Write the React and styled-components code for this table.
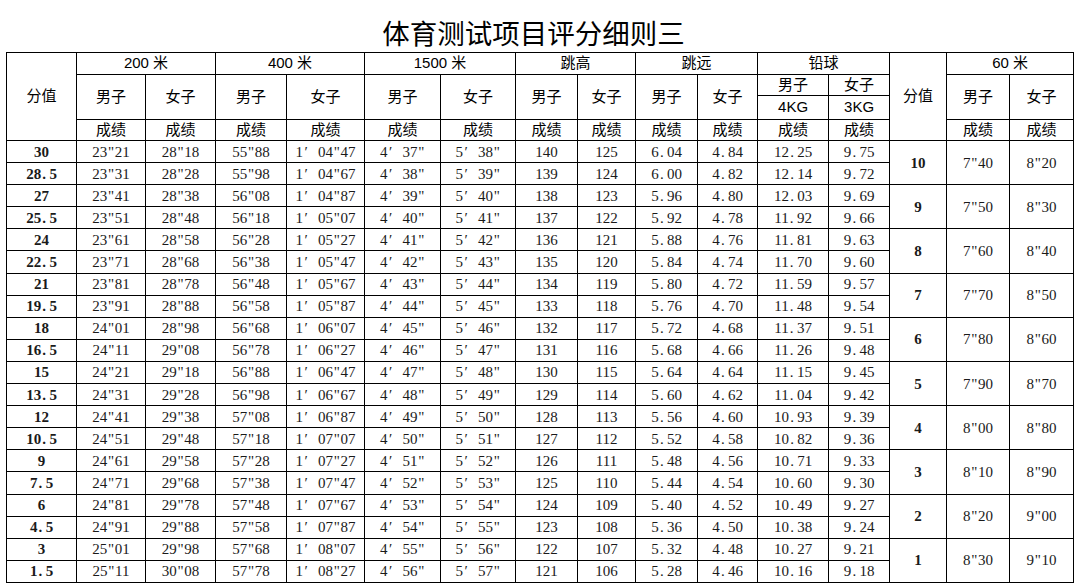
import React from 'react';
import styled, { createGlobalStyle } from 'styled-components';

// column widths, left to right
const widths = [70, 69, 70, 71, 78, 76, 75, 62, 58, 62, 60, 71, 61, 57, 63, 64];

const events = ['200 米', '400 米', '1500 米', '跳高', '跳远', '铅球'];

const pad = n => String(n).padStart(2, '0');
const hundredths = v => `${Math.floor(v / 100)}.${pad(v % 100)}`;
const sprint = v => `${Math.floor(v / 100)}"${pad(v % 100)}`;
const score = v => (v % 2 === 0 ? String(v / 2) : `${(v - 1) / 2}.5`);

// the main block: 20 score steps, 30 down to 1.5
const rows = Array.from({ length: 20 }, (_, i) => {
  const lap = 6447 + 20 * i - 6000;
  return [
    score(60 - 3 * i),
    sprint(2321 + 10 * i),
    sprint(2818 + 10 * i),
    sprint(5588 + 10 * i),
    `1′${pad(Math.floor(lap / 100))}"${pad(lap % 100)}`,
    `4′${37 + i}"`,
    `5′${38 + i}"`,
    String(140 - i),
    String(125 - i),
    hundredths(604 - 4 * i),
    hundredths(484 - 2 * i),
    hundredths(1225 - 11 * i),
    hundredths(975 - 3 * i),
  ];
});

// 60 米 block, one row for every two of the main rows
const dash = Array.from({ length: 10 }, (_, k) => [
  String(10 - k),
  sprint(740 + 10 * k),
  sprint(820 + 10 * k),
]);

// SimSun-like spacing for the marks inside a result
const marks = text =>
  text.split('').map((ch, i) => {
    if (ch === '.') return <Dot key={i}>.</Dot>;
    if (ch === '′') return <Prime key={i}>′</Prime>;
    if (ch === '"') return <Quote key={i}>"</Quote>;
    return ch;
  });

const GlobalStyle = createGlobalStyle`
  body {
    margin: 0;
    background: #fff;
    color: #000;
  }
`;

const App = () => (
  <Sheet>
    <GlobalStyle />
    <Title>体育测试项目评分细则三</Title>
    <Grid>
      <colgroup>
        {widths.map((w, i) => (
          <Col key={i} $w={w} />
        ))}
      </colgroup>
      <thead>
        <Row $h={22}>
          <Head rowSpan={4}>分值</Head>
          {events.map(name => (
            <Head key={name} colSpan={2}>{name}</Head>
          ))}
          <Head rowSpan={4}>分值</Head>
          <Head colSpan={2}>60 米</Head>
        </Row>
        <Row $h={21.5}>
          {[0, 1, 2, 3, 4].map(k => (
            <React.Fragment key={k}>
              <Head rowSpan={2}>男子</Head>
              <Head rowSpan={2}>女子</Head>
            </React.Fragment>
          ))}
          <Head>男子</Head>
          <Head>女子</Head>
          <Head rowSpan={2}>男子</Head>
          <Head rowSpan={2}>女子</Head>
        </Row>
        <Row $h={23.5}>
          <Head>4KG</Head>
          <Head>3KG</Head>
        </Row>
        <Row $h={21.5}>
          {Array.from({ length: 12 }, (_, k) => (
            <Head key={k}>成绩</Head>
          ))}
          <Head>成绩</Head>
          <Head>成绩</Head>
        </Row>
      </thead>
      <tbody>
        {rows.map((row, i) => (
          <Row key={i} $h={22.1}>
            <Cell $bold>{marks(row[0])}</Cell>
            {row.slice(1).map((v, j) => (
              <Cell key={j}>{marks(v)}</Cell>
            ))}
            {i % 2 === 0 && (
              <>
                <Cell $bold rowSpan={2}>{dash[i / 2][0]}</Cell>
                <Cell rowSpan={2}>{marks(dash[i / 2][1])}</Cell>
                <Cell rowSpan={2}>{marks(dash[i / 2][2])}</Cell>
              </>
            )}
          </Row>
        ))}
      </tbody>
    </Grid>
  </Sheet>
);

const Sheet = styled.div`
  padding-left: 6px;
  width: 1067px;
`;

const Title = styled.h1`
  margin: 0;
  padding: 13px 12px 0 0;
  height: 38.5px;
  line-height: 38px;
  text-align: center;
  font-family: 'Noto Sans CJK SC', sans-serif;
  font-size: 27.5px;
  font-weight: 400;
`;

const Grid = styled.table`
  border-collapse: collapse;
  table-layout: fixed;
  width: 1067px;
`;

const Col = styled.col`
  width: ${p => p.$w}px;
`;

const Row = styled.tr`
  height: ${p => p.$h}px;
`;

const Head = styled.th`
  border: 1px solid #000;
  padding: 0;
  text-align: center;
  vertical-align: middle;
  font-family: 'Liberation Sans', 'Noto Sans CJK SC', sans-serif;
  font-size: 15px;
  font-weight: 400;
  line-height: 18px;
`;

const Cell = styled.td`
  border: 1px solid #000;
  padding: 0;
  text-align: center;
  vertical-align: middle;
  font-family: 'Liberation Serif', serif;
  font-size: 15px;
  font-weight: ${p => (p.$bold ? 700 : 400)};
  line-height: 18px;
  color: #1a1a1a;
  white-space: nowrap;
`;

const Dot = styled.span`
  display: inline-block;
  width: 0.55em;
  padding-left: 0.08em;
  box-sizing: border-box;
  text-align: left;
`;

const Prime = styled.span`
  display: inline-block;
  width: 1em;
  padding-left: 0.1em;
  box-sizing: border-box;
  text-align: left;
`;

const Quote = styled.span`
  display: inline-block;
  width: 0.5em;
  text-align: center;
`;

export default App;
